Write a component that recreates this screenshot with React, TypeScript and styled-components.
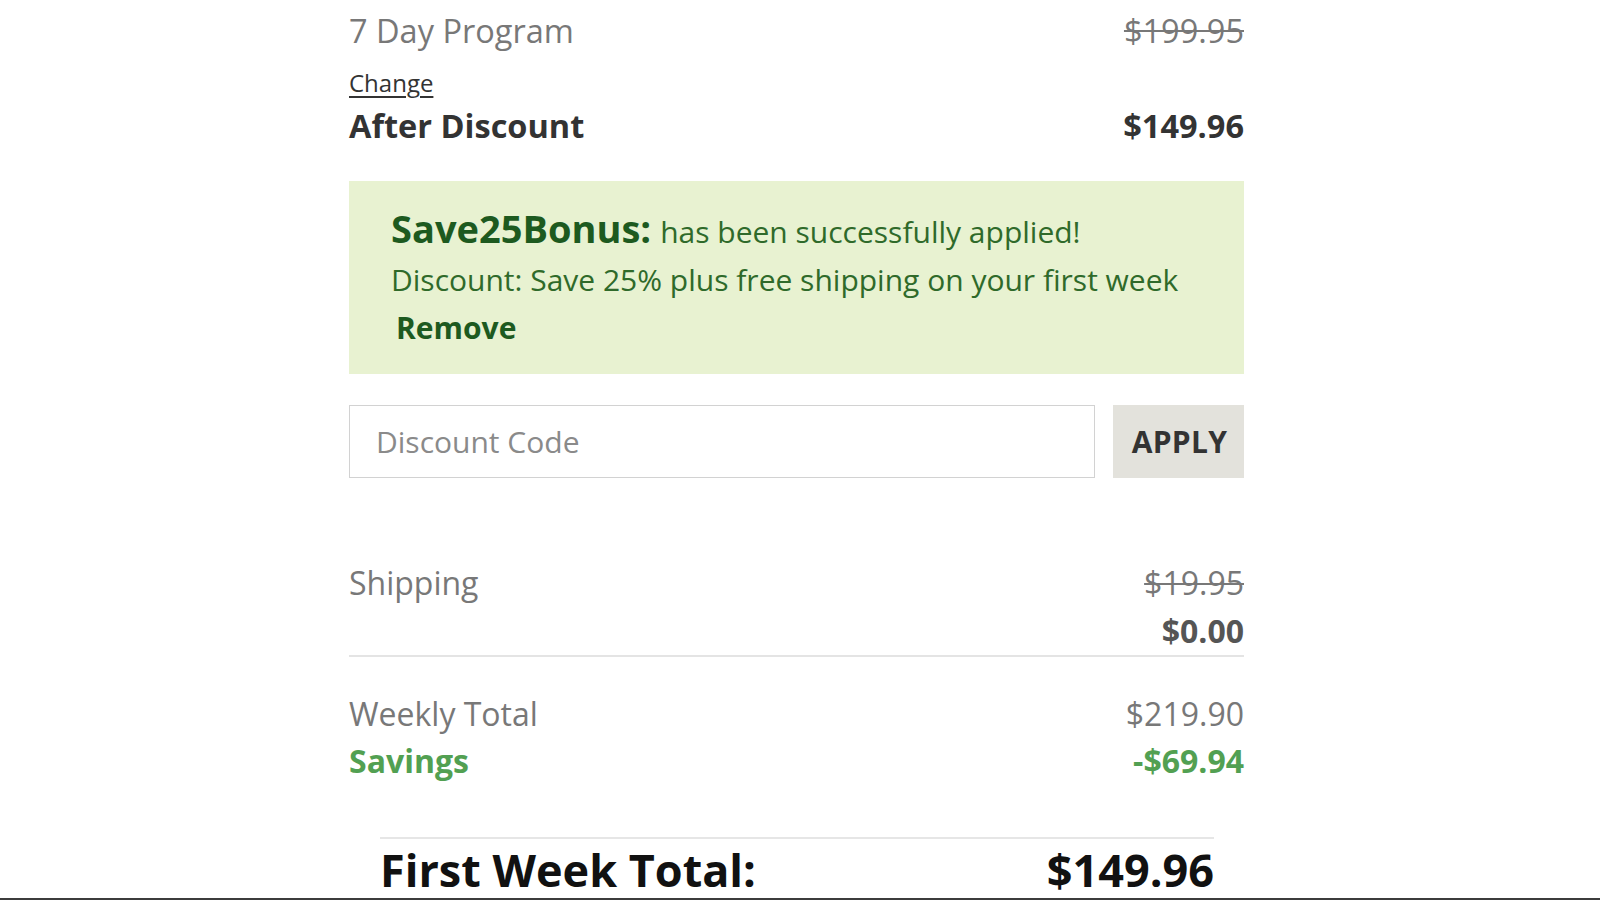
import React from "react";
import styled, { createGlobalStyle } from "styled-components";

const GlobalStyle = createGlobalStyle`
  html, body {
    margin: 0;
    padding: 0;
    background: #ffffff;
    font-family: "Open Sans", "Noto Sans", sans-serif;
  }
  * { box-sizing: border-box; }
`;

const Page = styled.div`
  width: 100%;
  display: flex;
  flex-direction: column;
`;

const Summary = styled.section`
  width: 895px;
  margin-left: 349px;
  padding-top: 9px;
  display: flex;
  flex-direction: column;
`;

const Row = styled.div<{ $mt?: number; $lh?: number }>`
  display: flex;
  justify-content: space-between;
  align-items: flex-start;
  margin-top: ${(p) => p.$mt ?? 0}px;
  line-height: ${(p) => p.$lh ?? 44}px;
`;

const Label = styled.span<{ $tone?: "muted" | "dark" | "green"; $bold?: boolean; $size?: number }>`
  font-size: ${(p) => p.$size ?? 32}px;
  font-weight: ${(p) => (p.$bold ? 700 : 400)};
  color: ${(p) =>
    p.$tone === "dark" ? "#333333" : p.$tone === "green" ? "#52a052" : "#787878"};
`;

const Price = styled.span<{ $tone?: "muted" | "dark" | "green" | "mid"; $bold?: boolean; $strike?: boolean; $size?: number }>`
  font-size: ${(p) => p.$size ?? 32}px;
  font-weight: ${(p) => (p.$bold ? 700 : 400)};
  text-decoration: ${(p) => (p.$strike ? "line-through" : "none")};
  text-decoration-thickness: 2px;
  color: ${(p) =>
    p.$tone === "dark"
      ? "#333333"
      : p.$tone === "green"
      ? "#52a052"
      : p.$tone === "mid"
      ? "#555555"
      : "#787878"};
`;

const ChangeLink = styled.a`
  align-self: flex-start;
  margin-top: 14px;
  font-size: 24px;
  line-height: 32px;
  color: #333333;
  text-decoration: underline;
  text-underline-offset: 4px;
  cursor: pointer;
`;

const PromoPanel = styled.div`
  margin-top: 35px;
  background: #e8f2d1;
  padding: 23px 40px 22px 42px;
  display: flex;
  flex-direction: column;
`;

const PromoHead = styled.div`
  line-height: 48px;
  color: #2f6a2a;
  font-size: 30px;
`;

const PromoCode = styled.strong`
  font-size: 38px;
  font-weight: 700;
  color: #1d5a1f;
  margin-right: 9px;
`;

const PromoLine = styled.div`
  line-height: 48px;
  font-size: 30px;
  color: #2f6a2a;
`;

const RemoveLink = styled.a`
  align-self: flex-start;
  margin-left: 5px;
  line-height: 48px;
  font-size: 30px;
  font-weight: 700;
  color: #1d5a1f;
  cursor: pointer;
`;

const CodeForm = styled.form`
  margin-top: 31px;
  display: flex;
  gap: 18px;
  height: 73px;
`;

const CodeInput = styled.input`
  flex: 1;
  height: 100%;
  border: 1px solid #d2d2d2;
  padding: 0 26px;
  font-family: "Open Sans", "Noto Sans", sans-serif;
  font-size: 30px;
  color: #333;
  outline: none;
  &::placeholder { color: #8a8a8a; }
`;

const ApplyButton = styled.button`
  width: 131px;
  height: 100%;
  border: none;
  background: #e3e2dc;
  font-family: "Open Sans", "Noto Sans", sans-serif;
  font-size: 30px;
  font-weight: 700;
  color: #333333;
  letter-spacing: 0.3px;
  padding: 0 0 0 2px;
  cursor: pointer;
`;

const ShippingRow = styled.div`
  margin-top: 83px;
  display: flex;
  justify-content: space-between;
  align-items: flex-start;
  line-height: 44px;
  padding-bottom: 2px;
  border-bottom: 2px solid #e4e4e4;
`;

const PriceStack = styled.div`
  display: flex;
  flex-direction: column;
  align-items: flex-end;
  gap: 4px;
`;

const Totals = styled.div`
  margin-top: 33px;
  display: flex;
  flex-direction: column;
`;

const FinalRow = styled.div`
  margin: 53px 30px 0 31px;
  border-top: 2px solid #e6e6e6;
  padding-top: 4px;
  display: flex;
  justify-content: space-between;
  line-height: 53px;
  font-size: 45px;
  font-weight: 700;
  color: #111111;
`;

const BottomBar = styled.div`
  margin-top: 2px;
  height: 10px;
  background: #3c3c3c;
`;

export default function App() {
  return (
    <Page>
      <GlobalStyle />
      <Summary>
        <Row>
          <Label $size={32.5}>7 Day Program</Label>
          <Price $strike $size={32.5}>$199.95</Price>
        </Row>
        <ChangeLink>Change</ChangeLink>
        <Row $mt={7} $lh={40}>
          <Label $tone="dark" $bold $size={32.5}>After Discount</Label>
          <Price $tone="dark" $bold $size={32.5}>$149.96</Price>
        </Row>

        <PromoPanel>
          <PromoHead>
            <PromoCode>Save25Bonus:</PromoCode>has been successfully applied!
          </PromoHead>
          <PromoLine>Discount: Save 25% plus free shipping on your first week</PromoLine>
          <RemoveLink>Remove</RemoveLink>
        </PromoPanel>

        <CodeForm onSubmit={(e) => e.preventDefault()}>
          <CodeInput placeholder="Discount Code" />
          <ApplyButton type="submit">APPLY</ApplyButton>
        </CodeForm>

        <ShippingRow>
          <Label>Shipping</Label>
          <PriceStack>
            <Price $strike>$19.95</Price>
            <Price $tone="mid" $bold>$0.00</Price>
          </PriceStack>
        </ShippingRow>

        <Totals>
          <Row $lh={47}>
            <Label>Weekly Total</Label>
            <Price>$219.90</Price>
          </Row>
          <Row $lh={47}>
            <Label $tone="green" $bold>Savings</Label>
            <Price $tone="green" $bold>-$69.94</Price>
          </Row>
        </Totals>

        <FinalRow>
          <span>First Week Total:</span>
          <span>$149.96</span>
        </FinalRow>
      </Summary>
      <BottomBar />
    </Page>
  );
}
